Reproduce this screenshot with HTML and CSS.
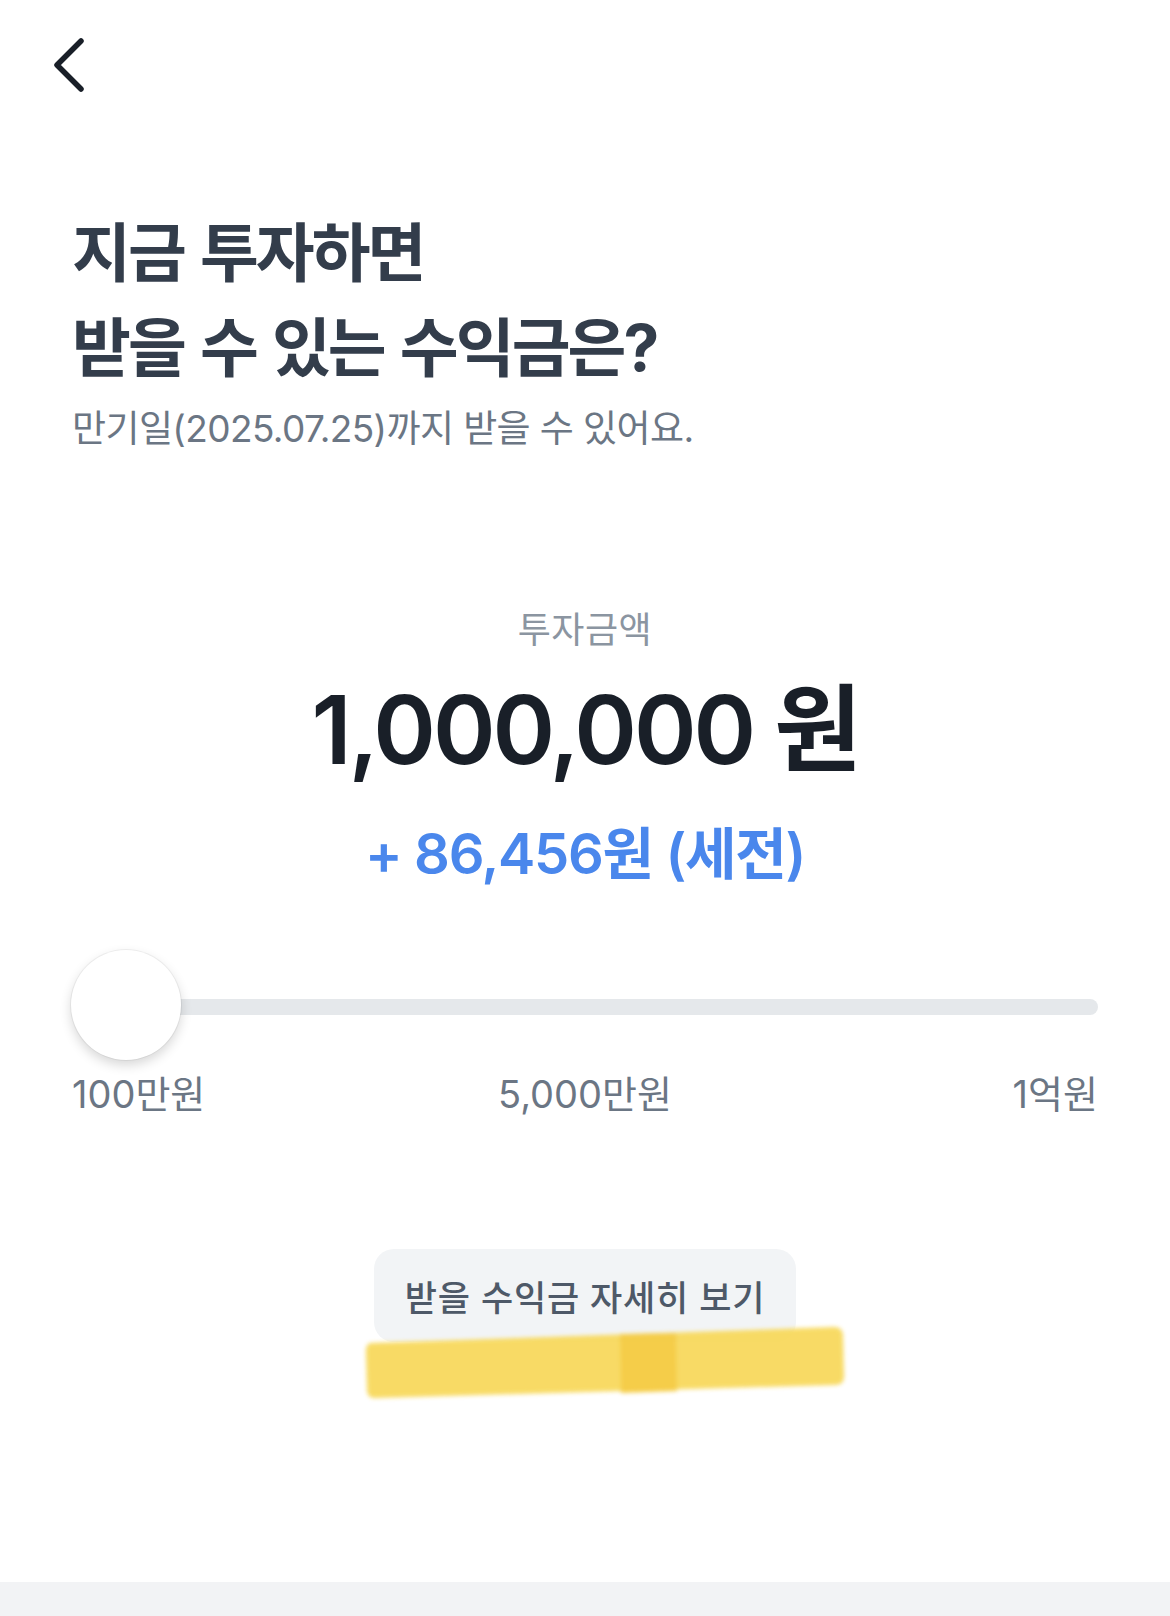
FILE: index.html
```html
<!DOCTYPE html>
<html lang="ko">
<head>
  <meta charset="UTF-8">
  <meta name="viewport" content="width=device-width, initial-scale=1.0">
  <title>수익금 계산</title>
  <link rel="stylesheet" href="styles.css">
</head>
<body>
  <div class="screen">
    <div class="topbar">
      <button class="back" aria-label="뒤로">
        <svg width="40" height="60" viewBox="0 0 40 60">
          <path d="M31 6 L7 30 L31 54" fill="none" stroke="#191f28" stroke-width="5.5" stroke-linecap="round" stroke-linejoin="round"/>
        </svg>
      </button>
    </div>

    <div class="intro">
      <h1>지금 투자하면<br>받을 수 있는 수익금은?</h1>
      <p class="subtitle">만기일(2025.07.25)까지 받을 수 있어요.</p>
    </div>

    <div class="amount">
      <div class="amount-label">투자금액</div>
      <div class="amount-value">1,000,000 원</div>
      <div class="amount-profit">+ 86,456원 (세전)</div>
    </div>

    <div class="range">
      <div class="slider">
        <div class="track"></div>
        <div class="thumb"></div>
      </div>
      <div class="ticks">
        <span class="tick-left">100만원</span>
        <span class="tick-mid">5,000만원</span>
        <span class="tick-right">1억원</span>
      </div>
    </div>

    <div class="cta">
      <button class="detail-btn">받을 수익금 자세히 보기</button>
      <svg class="marker" width="510" height="95" viewBox="0 0 510 95">
        <defs>
          <filter id="soft" x="-5%" y="-20%" width="110%" height="140%">
            <feGaussianBlur stdDeviation="2"/>
          </filter>
        </defs>
        <g filter="url(#soft)">
          <path d="M20 28 Q15 30 16 40 L17 76 Q18 84 26 83 L486 70 Q495 69 494 60 L493 20 Q492 11 483 12 Z" fill="#f8d95d"/>
          <path d="M270 19 L326 18 L327 76 L271 78 Z" fill="#f5cb3f"/>
        </g>
      </svg>
    </div>

    <div class="bottom-bar"></div>
  </div>
</body>
</html>
```

FILE: styles.css
```css
body {
  margin: 0;
  padding: 0;
  background-color: #ffffff;
  font-family: Inter, "Noto Sans CJK KR", sans-serif;
  overflow: hidden;
}

.screen {
  width: 1170px;
  height: 1616px;
  display: flex;
  flex-direction: column;
}

.topbar {
  height: 130px;
  padding: 35px 0 0 50px;
  box-sizing: border-box;
}

.back {
  display: block;
  padding: 0;
  border: none;
  background: none;
  cursor: pointer;
}

.back svg {
  display: block;
}

.intro {
  padding: 75px 72px 0;
}

.intro h1 {
  margin: 0;
  font-size: 64px;
  line-height: 95px;
  font-weight: 700;
  letter-spacing: -3px;
  word-spacing: 4px;
  color: #333d4b;
}

.subtitle {
  margin: 9px 0 0;
  font-size: 37px;
  line-height: 50px;
  letter-spacing: -0.6px;
  color: #6b7684;
}

.amount {
  margin-top: 151px;
  text-align: center;
}

.amount-label {
  font-size: 36px;
  line-height: 50px;
  letter-spacing: 0.5px;
  color: #8b95a1;
}

.amount-value {
  margin-top: 20px;
  font-size: 95px;
  line-height: 110px;
  font-weight: 600;
  letter-spacing: -3px;
  color: #191f28;
}

.amount-profit {
  margin-top: 33px;
  font-size: 56px;
  line-height: 72px;
  font-weight: 600;
  letter-spacing: -1.3px;
  color: #4a87ec;
}

.range {
  margin-top: 62px;
  padding: 0 72px;
}

.slider {
  position: relative;
  height: 110px;
  display: flex;
  align-items: center;
}

.track {
  flex: 1;
  height: 16px;
  border-radius: 8px;
  background-color: #e5e8eb;
}

.thumb {
  position: absolute;
  left: -1px;
  top: -2px;
  width: 110px;
  height: 110px;
  border-radius: 50%;
  background-color: #ffffff;
  box-shadow: 0 0 0 1px rgba(0, 0, 0, 0.05), 0 5px 12px rgba(0, 0, 0, 0.16);
}

.ticks {
  margin-top: 7px;
  display: grid;
  grid-template-columns: 1fr auto 1fr;
  font-size: 38px;
  line-height: 50px;
  letter-spacing: 0;
  color: #6b7684;
}

.tick-left {
  justify-self: start;
}

.tick-right {
  justify-self: end;
}

.cta {
  position: relative;
  margin-top: 130px;
  display: flex;
  justify-content: center;
}

.detail-btn {
  height: 93px;
  padding: 0 31px;
  border: none;
  border-radius: 20px;
  background-color: #f2f4f6;
  font-family: Inter, "Noto Sans CJK KR", sans-serif;
  font-size: 35px;
  font-weight: 500;
  letter-spacing: 0.8px;
  color: #4e5968;
}

.marker {
  position: absolute;
  left: 350px;
  top: 66px;
  opacity: 0.95;
}

.bottom-bar {
  margin-top: auto;
  height: 34px;
  background-color: #f2f3f5;
}
```
